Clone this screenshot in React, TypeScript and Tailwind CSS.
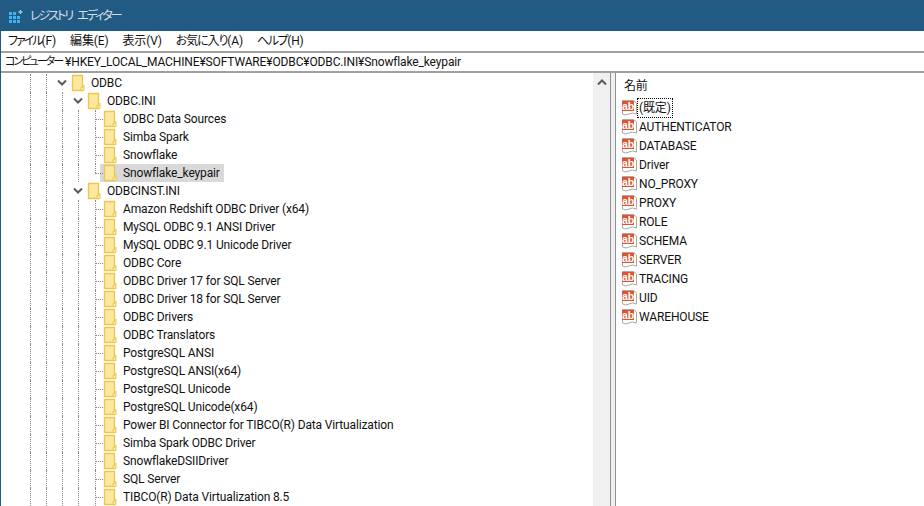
const FONT = "font-['Roboto','Noto_Sans_CJK_JP',sans-serif] [font-feature-settings:'palt'] tracking-[-0.14px]";

type Node = { label: string; depth: number; open?: boolean; selected?: boolean; last?: boolean };

const NODES: Node[] = [
  { label: "ODBC", depth: 0, open: true },
  { label: "ODBC.INI", depth: 1, open: true },
  { label: "ODBC Data Sources", depth: 2 },
  { label: "Simba Spark", depth: 2 },
  { label: "Snowflake", depth: 2 },
  { label: "Snowflake_keypair", depth: 2, selected: true, last: true },
  { label: "ODBCINST.INI", depth: 1, open: true },
  { label: "Amazon Redshift ODBC Driver (x64)", depth: 2 },
  { label: "MySQL ODBC 9.1 ANSI Driver", depth: 2 },
  { label: "MySQL ODBC 9.1 Unicode Driver", depth: 2 },
  { label: "ODBC Core", depth: 2 },
  { label: "ODBC Driver 17 for SQL Server", depth: 2 },
  { label: "ODBC Driver 18 for SQL Server", depth: 2 },
  { label: "ODBC Drivers", depth: 2 },
  { label: "ODBC Translators", depth: 2 },
  { label: "PostgreSQL ANSI", depth: 2 },
  { label: "PostgreSQL ANSI(x64)", depth: 2 },
  { label: "PostgreSQL Unicode", depth: 2 },
  { label: "PostgreSQL Unicode(x64)", depth: 2 },
  { label: "Power BI Connector for TIBCO(R) Data Virtualization", depth: 2 },
  { label: "Simba Spark ODBC Driver", depth: 2 },
  { label: "SnowflakeDSIIDriver", depth: 2 },
  { label: "SQL Server", depth: 2 },
  { label: "TIBCO(R) Data Virtualization 8.5", depth: 2 },
];

const VALUES = ["(既定)", "AUTHENTICATOR", "DATABASE", "Driver", "NO_PROXY", "PROXY", "ROLE", "SCHEMA", "SERVER", "TRACING", "UID", "WAREHOUSE"];

// kana in the screenshot are much narrower than Noto's, so they get their own tracking
const MENUS: [string, string, string][] = [
  ["ファイル", "(F)", "tracking-[-2px]"],
  ["編集", "(E)", ""],
  ["表示", "(V)", ""],
  ["お気に入り", "(A)", "tracking-[-1.1px]"],
  ["ヘルプ", "(H)", "tracking-[-1.4px]"],
];

function Folder() {
  return (
    <svg width="14" height="18" viewBox="0 0 14 18" className="shrink-0">
      <path d="M1.5 1.5H11.5V16.5H1.5Z" fill="#fde8a0" stroke="#eec64f" strokeWidth="1.3" />
      <path d="M11.5 11.5H13V16.5H10V13.5H11.5Z" fill="#fde8a0" stroke="#eec64f" />
    </svg>
  );
}

function AppIcon() {
  return (
    <svg width="16" height="16" viewBox="0 0 16 16" className="shrink-0">
      <g fill="#3fb4ec">
        <rect x="1" y="4" width="3" height="3" />
        <rect x="5" y="4" width="3" height="3" />
        <rect x="1" y="8" width="3" height="3" />
        <rect x="5" y="8" width="3" height="3" />
        <rect x="9" y="8" width="3" height="3" />
        <rect x="1" y="12" width="3" height="3" />
        <rect x="5" y="12" width="3" height="3" />
        <rect x="9" y="12" width="3" height="3" />
      </g>
      <path d="M12.5 2V6M10.5 4H14.5" stroke="#7fd0f5" strokeWidth="1.4" />
    </svg>
  );
}

function AbIcon() {
  return (
    <svg width="17" height="17" viewBox="0 0 17 17" className="shrink-0">
      <path d="M1.5 1.5H12.5L15.5 4V15Q11 13 8 15T1.5 15Z" fill="#fff" stroke="#a8a8a8" />
      <rect x="1" y="2" width="12" height="10" fill="#e0532f" />
      <text x="1" y="10.5" fontSize="10.5" fontWeight="700" fill="#fff" fontFamily="'Liberation Sans',sans-serif">ab</text>
    </svg>
  );
}

function Chevron({ up }: { up?: boolean }) {
  return (
    <svg width="10" height="6" viewBox="0 0 10 6" className="shrink-0">
      <path d={up ? "M1 5.5L5 1.5L9 5.5" : "M1 .5L5 4.5L9 .5"} fill="none" stroke="#5a5a5a" strokeWidth="2" />
    </svg>
  );
}

function Guide() {
  return (
    <span className="w-4 h-full shrink-0">
      <span className="block h-full border-l border-dotted border-[#8a8a8a]" />
    </span>
  );
}

function TreeRow({ node }: { node: Node }) {
  return (
    <div className="flex items-center h-[18px] pl-[29px]">
      <Guide />
      <Guide />
      {node.depth >= 1 && <Guide />}
      {node.depth === 2 && <Guide />}
      {node.depth === 2 ? (
        <span className="w-[5px] ml-px h-full shrink-0 relative">
          <span className={`block border-l border-dotted border-[#8a8a8a] ${node.last ? "h-1/2" : "h-full"}`} />
          <span className="absolute left-0 top-[9px] w-[8px] border-t border-dotted border-[#8a8a8a]" />
        </span>
      ) : (
        <span className="w-4 -ml-2 shrink-0 flex justify-center">
          <Chevron />
        </span>
      )}
      <span className={`flex items-center h-full pr-1 ${node.depth === 2 ? "pl-[3px]" : "pl-px"} ${node.selected ? "bg-[#d9d9d9]" : ""}`}>
        <Folder />
        <span className="ml-[6px] whitespace-nowrap text-[#111]">{node.label}</span>
      </span>
    </div>
  );
}

export default function App() {
  return (
    <div className={`w-[924px] h-[506px] overflow-hidden bg-white border-l border-[#215b84] flex flex-col text-[12px] leading-[18px] ${FONT}`}>
      <div className="h-[31px] shrink-0 bg-[#215b84] flex items-center pl-[7px] gap-[6px] text-white/80">
        <AppIcon />
        <span className="tracking-[-2px] [word-spacing:4px]">レジストリ エディター</span>
      </div>
      <div className="h-5 shrink-0 flex items-center pl-[7px] gap-[14px] text-[#111]">
        {MENUS.map(([name, key, track]) => (
          <span key={key}>
            <span className={track}>{name}</span>
            {key}
          </span>
        ))}
      </div>
      <div className="h-[22px] shrink-0 flex items-center pl-[4px] border-y-2 border-[#a0a0a0] text-[#111] whitespace-nowrap">
        <span className="text-[11px] tracking-[-2px]">コンピューター</span>
        <span className="ml-[3px]">¥HKEY_LOCAL_MACHINE¥SOFTWARE¥ODBC¥ODBC.INI¥Snowflake_keypair</span>
      </div>
      <div className="flex-1 flex min-h-0">
        <div className="w-[592px] shrink-0 pt-[1px] overflow-hidden">
          {NODES.map((n) => (
            <TreeRow key={n.label} node={n} />
          ))}
        </div>
        <div className="w-[17px] shrink-0 bg-[#f0f0f0] flex justify-center pt-[6px]">
          <Chevron up />
        </div>
        <div className="w-[6px] shrink-0 bg-[#f0f0f0] border-x border-[#8f8f94]" />
        <div className="flex-1 pl-[5px] pt-[4px]">
          <div className="h-[21px] pl-[3px] text-[#111]">名前</div>
          {VALUES.map((v, i) => (
            <div key={v} className="flex items-center h-[19px] text-[#111]">
              <AbIcon />
              <span className={i === 0 ? "outline-1 outline-dotted outline-black px-[1px]" : "px-[1px]"}>{v}</span>
            </div>
          ))}
        </div>
      </div>
    </div>
  );
}
